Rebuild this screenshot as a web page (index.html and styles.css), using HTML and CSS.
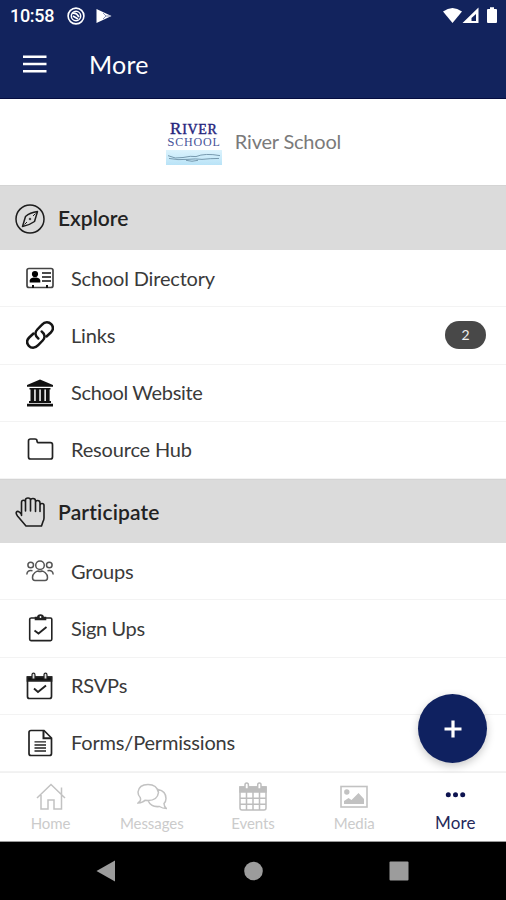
FILE: index.html
```html
<!DOCTYPE html>
<html lang="en">
<head>
<meta charset="utf-8">
<title>More</title>
<link rel="stylesheet" href="styles.css">
</head>
<body>
<div class="app">
  <header class="top">
    <div class="status">
      <span class="time">10:58</span>
      <svg class="st-ring" width="18" height="18" viewBox="0 0 18 18" fill="none" stroke="#fff"><circle cx="9" cy="9" r="7.9" stroke-width="1.6"/><circle cx="9" cy="9" r="4.7" stroke-width="1.5"/><path d="M5 6.500Q9 5 12 10M6 9l5 3" stroke-width="1.700"/></svg>
      <svg class="st-play" width="16" height="16" viewBox="0 0 16 16"><path d="M.5 1v14L15.500 8z" fill="#fff"/><path d="M7 5l3 3-3 3M10 8h4" stroke="#8993b7" fill="none"/></svg>
      <svg class="st-right" width="58" height="18" viewBox="0 0 58 18" fill="#fff"><path d="M3 4.500Q12.500-2.500 22 4.500L12.500 16z"/><path fill-rule="evenodd" d="M22.500 16L38.500 .5V16zM31.500 14h4.500V7l-4.500 4z"/><path d="M47 3q0-1 1-1h2V.2h4V2h2q1 0 1 1v12q0 1-1 1h-8q-1 0-1-1z"/></svg>
    </div>
    <div class="bar">
      <svg width="24" height="18" viewBox="0 0 24 18"><path d="M0 1.700h23.500M0 9h23.500M0 16.300h23.500" stroke="#fff" stroke-width="2.500"/></svg>
      <h1>More</h1>
    </div>
  </header>

  <div class="school">
    <div class="logo">
      <div class="logo-a"><b>R</b>IVER</div>
      <div class="logo-b"><b>S</b>CHOOL</div>
      <svg width="56" height="15" viewBox="0 0 56 16" preserveAspectRatio="none"><defs><linearGradient id="w" x2="0" y2="1"><stop stop-color="#dcf3fd"/><stop offset="1" stop-color="#b9e3f7"/></linearGradient></defs><path d="M0 0h56v16H0z" fill="url(#w)"/><path d="M2 6q7 4 15 2t13-1q9-4 24-1M3 9q9 2 18 1t15 0q8-1 17-1M20 11q6 2 12 0" fill="none" stroke="#6b8da3" stroke-width=".9"/></svg>
    </div>
    <span class="school-name">River School</span>
  </div>

  <section>
    <h2><svg width="30" height="30" viewBox="0 0 30 30" fill="none" stroke="#1c1c1c" stroke-width="1.500"><circle cx="15" cy="15" r="14"/><path d="M22.500 7.500L19.500 17.500Q14 21.500 7.500 22.500L10.500 12.500Q15 8.500 22.500 7.500z" stroke-linejoin="round"/><path d="M20.500 9.500l-2.500 2.500M9.500 20.500l2.500-2.500" stroke-width="1"/><circle cx="15" cy="15" r=".8" stroke-width="1"/></svg><span>Explore</span></h2>
    <ul>
      <li><svg width="28" height="28" viewBox="0 0 28 28"><rect x="1" y="4.500" width="26" height="19" rx="2" fill="none" stroke="#444" stroke-width="1.700"/><circle cx="9" cy="10" r="3.100"/><path d="M3.700 18.500v-2Q4 14 7.500 13.500h3Q14 14 14.300 16.500v2z"/><path d="M16 9H25M16 13H25M16 17H25" stroke="#111" stroke-width="1.400"/><path d="M7 21v3M21 21v3" stroke="#111" stroke-width="2"/></svg><span>School Directory</span></li>
      <li><svg width="28" height="28" viewBox="0 0 28 28" fill="none" stroke="#151515" stroke-width="2.500" stroke-linecap="round"><path d="M12.300 17.500C9 15 8.500 11.500 11.300 8.500L15.800 3.800C19 .3 23 .8 25.200 3.200C27.500 5.800 27.300 9 24.800 11.500L20.500 15.500"/><path d="M15.700 10.500C19 13 19.500 16.500 16.700 19.500L12.200 24.200C9 27.700 5 27.200 2.800 24.800C.5 22.200.7 19 3.200 16.500L7.500 12.500"/></svg><span>Links</span><em>2</em></li>
      <li><svg width="28" height="28" viewBox="0 0 28 28" fill="#111"><path d="M14 .5L27 6v1.800H1V6zM3.500 9h21v1.500h-21zM4.500 10.500h3.700v12H4.500zM9.700 10.500h3.600v12H9.700zM14.800 10.500h3.600v12h-3.600zM19.900 10.500h3.700v12h-3.700zM3 22h22v2H3zM1 24.700h26v2.800H1z"/></svg><span class="tight">School Website</span></li>
      <li><svg width="28" height="28" viewBox="0 0 28 28" fill="none" stroke="#222" stroke-width="1.700"><path d="M2.500 5q0-2 2-2H9q2 0 2 2 0 1.700 2 1.700h11.500q2 0 2 2V21q0 2-2 2h-20q-2 0-2-2z"/></svg><span>Resource Hub</span></li>
    </ul>
  </section>

  <section class="second">
    <h2><svg width="30" height="30" viewBox="0 0 30 30" fill="none" stroke="#1c1c1c" stroke-width="1.600" stroke-linejoin="round" stroke-linecap="round"><path d="M6.500 18.500V5.500Q6.500 3.300 8.500 3.300T10.500 5.500V14M10.500 6V3Q10.500 1 13 1T15.500 3V14M15.500 3.500Q15.500 1.500 18 1.500T20.500 4V14.500M20.500 5.500Q20.500 3.500 22.700 3.500T25 6V14.500M25 8.500Q25 6.500 27 6.500T29 8.500V21Q29 23 28 24.500L26.500 29H11L2.500 19Q.5 16.500 1.500 15T5 15.500L6.500 17.500"/></svg><span class="wide">Participate</span></h2>
    <ul>
      <li><svg width="28" height="28" viewBox="0 0 28 28" fill="none" stroke="#555" stroke-width="1.500"><circle cx="14" cy="8.200" r="4.300"/><circle cx="4.700" cy="8" r="2.800"/><circle cx="23.300" cy="8" r="2.800"/><path d="M9 15.500Q11 14 12 14q2 1.200 4 0 1 0 3 1.500 2.500 2 2.500 5 0 3-2.500 3H9q-2.500 0-2.500-3 0-3 2.500-5zM.8 17.500Q1.200 12.500 6.500 13.700M27.200 17.500Q26.800 12.500 21.500 13.700"/></svg><span>Groups</span></li>
      <li><svg width="28" height="28" viewBox="0 0 28 28" fill="none" stroke="#222" stroke-width="1.600"><path d="M4.500 4h20q1.300 0 1.300 1.300v20q0 1.300-1.300 1.300H5q-1.300 0-1.300-1.300v-20Q3.700 4 5 4z"/><path d="M9.500 5.500V3.500h2.200Q12 1 14.500 1t2.800 2.500H19.500v2z" fill="#222"/><path d="M8.500 16.500l4 3 8-6.500" stroke-width="1.800"/><circle cx="14.500" cy="3" r=".9" fill="#fff" stroke="none"/></svg><span class="tight">Sign Ups</span></li>
      <li><svg width="28" height="28" viewBox="0 0 28 28" fill="none" stroke="#222" stroke-width="1.700"><path d="M1.500 5h24v19.500q0 2-2 2H3.500q-2 0-2-2z"/><path d="M1.500 5h24v3.800H1.500z" fill="#111"/><path d="M6 7V3q0-1.800 1.500-1.800T9 3v4zM18 7V3q0-1.800 1.500-1.800T21 3v4z" fill="#ddd" stroke-width="1.200"/><path d="M8 16.500l4 3.500 8-6.500" stroke-width="1.900"/></svg><span>RSVPs</span></li>
      <li><svg width="28" height="28" viewBox="0 0 28 28" fill="none" stroke="#222" stroke-width="1.700"><path d="M5 1.500h13l7.500 7.500v15.500q0 2-2 2H5q-2 0-2-2v-21q0-2 2-2z"/><path d="M17.500 2v7.300h7.500" stroke-width="2"/><path d="M8.500 12.800h11.500M8.500 16h11.500M8.500 19h11.500M8.500 22h11.500" stroke-width="1.300"/></svg><span>Forms/Permissions</span></li>
    </ul>
  </section>

  <nav class="tabs">
    <a><svg width="30" height="30" viewBox="0 0 30 30" fill="none" stroke="#c2c2c2" stroke-width="1.500"><path d="M1 16L15 2.500 29 16M5 13v14h7v-9h6v9h7.500V5.500"/></svg><span>Home</span></a>
    <a><svg width="30" height="30" viewBox="0 0 30 30" fill="none" stroke="#c2c2c2" stroke-width="1.500"><path d="M3 19Q4 17.500 3.200 15.500Q1 13.500 1 10Q2 2.500 11 2.500T21.500 10.500Q20.500 18.500 11 18.500L8 18.200Q6 20.500 1 21zM21 7.500Q29 9 29 16.500Q29 19.500 27 21.500Q27 24.500 29.500 26.500Q25.500 26.500 22.500 24.500Q14 25.500 11 18.500"/></svg><span>Messages</span></a>
    <a><svg width="30" height="30" viewBox="0 0 30 30" fill="none" stroke="#bdbdbd" stroke-width="1.500"><path d="M2 5h26v21q0 2-2 2H4q-2 0-2-2zM8.500 10v18M15 10v18M21.500 10v18M2 16.300h26M2 22.300h26"/><path d="M2 5h26v5H2z" fill="#bdbdbd"/><path d="M7 7V3q0-2 1.700-2t1.700 2v4zM19.700 7V3q0-2 1.700-2T23 3v4z" fill="#fff"/></svg><span>Events</span></a>
    <a><svg width="30" height="30" viewBox="0 0 30 30" fill="none" stroke="#c2c2c2" stroke-width="1.600"><rect x="2" y="4.500" width="26" height="20.500"/><circle cx="7.800" cy="10" r="2.700" fill="#c2c2c2" stroke="none"/><path d="M5 22v-3l4.500-3 3 2 7-7L25 17v5z" fill="#c2c2c2" stroke="none"/></svg><span>Media</span></a>
    <a class="on"><svg width="30" height="30" viewBox="0 0 30 30" fill="#0d1350"><circle cx="8.300" cy="12.800" r="2.500"/><circle cx="15.500" cy="12.800" r="2.500"/><circle cx="22.700" cy="12.800" r="2.500"/></svg><span>More</span></a>
    <button class="fab" aria-label="Add"><svg width="18" height="18" viewBox="0 0 18 18"><path d="M9 .5v17M.5 9h17" stroke="#fff" stroke-width="3.200"/></svg></button>
  </nav>
  <footer class="sys">
    <svg width="506" height="58" viewBox="0 0 506 58" fill="#9c9c9c"><path d="M115 18.500v21L96.500 29z"/><circle cx="253.500" cy="29" r="9.300"/><rect x="389.500" y="19.500" width="19" height="19" rx="1"/></svg>
  </footer>
</div>
</body>
</html>
```
FILE: styles.css
```css
* { box-sizing: border-box; margin: 0; padding: 0; }
body { width: 506px; height: 900px; overflow: hidden; background: #fff; font-family: Lato, "Liberation Sans", sans-serif; font-variant-ligatures: none; }
svg { display: block; flex: none; }
.app { display: flex; flex-direction: column; height: 900px; }
.top { height: 99px; flex: none; background: #12235d; color: #fff; border-bottom: 1px solid #050d40; }
.status { height: 31px; display: flex; align-items: center; padding: 0 9px 0 10px; }
.time { font: 500 18px Roboto, sans-serif; width: 57px; letter-spacing: -0.3px; }
.st-play { margin-left: 11px; }
.st-right { margin-left: auto; margin-right: -1px; }
.bar { display: flex; align-items: center; height: 65px; padding-left: 23px; }
h1 { margin-left: 42px; font-size: 25px; font-weight: 400; letter-spacing: 0.2px; }
.school { height: 86px; flex: none; display: flex; align-items: center; justify-content: center; gap: 13px; }
.school .logo { margin-left: 1px; }
.logo { width: 56px; height: 45px; font-family: "Liberation Serif", serif; color: #24247c; text-align: center; white-space: nowrap; }
.logo-a { font-size: 14px; line-height: 15px; height: 15px; letter-spacing: 0.7px; -webkit-text-stroke: 0.4px #24247c; }
.logo-a b { font-size: 17px; line-height: 1; font-weight: 400; }
.logo-b { font-size: 12px; line-height: 15px; height: 15px; color: #48559a; letter-spacing: 0.8px; }
.logo-b b { font-size: 13px; line-height: 1; font-weight: 400; }
.school-name { font-size: 20px; color: #7a7a7a; letter-spacing: -0.2px; padding-bottom: 2px; }
h2 { height: 65px; display: flex; align-items: center; gap: 13px; padding-top: 1px; background: #dbdbdb; padding-left: 15px; font-size: 21px; font-weight: 600; color: #222; border-top: 1px solid #d4d4d4; }
h2 span { padding-bottom: 2px; }
.wide { letter-spacing: 0.15px; }
.second h2 { height: 64px; }
ul { list-style: none; height: 229px; display: grid; grid-template-rows: repeat(4, 1fr); }
li { display: flex; align-items: center; gap: 17px; padding: 0 20px 0 26px; border-bottom: 1px solid #f3f3f3; font-size: 20px; color: #3a3a3a; letter-spacing: -0.18px; }
li span { padding-bottom: 1px; }
.tight { letter-spacing: -0.34px; }
em { margin-left: auto; width: 41px; height: 28px; border-radius: 14px; background: #484848; color: #eee; font-size: 14px; font-style: normal; line-height: 28px; text-align: center; }
.tabs { position: relative; height: 70px; flex: none; display: grid; grid-template-columns: repeat(5, 1fr); border-top: 1px solid #f1f1f1; border-bottom: 1px solid #999; }
.tabs a { display: flex; flex-direction: column; align-items: center; padding-top: 9px; color: #cbcbcb; font-size: 15px; line-height: 18px; letter-spacing: -0.05px; }
.tabs a span { margin-top: 2px; }
.tabs .on { color: #25285a; font-size: 17px; letter-spacing: 0.2px; }
.fab { position: absolute; left: 418px; top: -79px; width: 69px; height: 69px; border: 0; border-radius: 50%; background: #0f2160; display: grid; place-items: center; box-shadow: 0 3px 8px rgba(0,0,0,.22); }
.sys { height: 58px; flex: none; background: #000; }
```
